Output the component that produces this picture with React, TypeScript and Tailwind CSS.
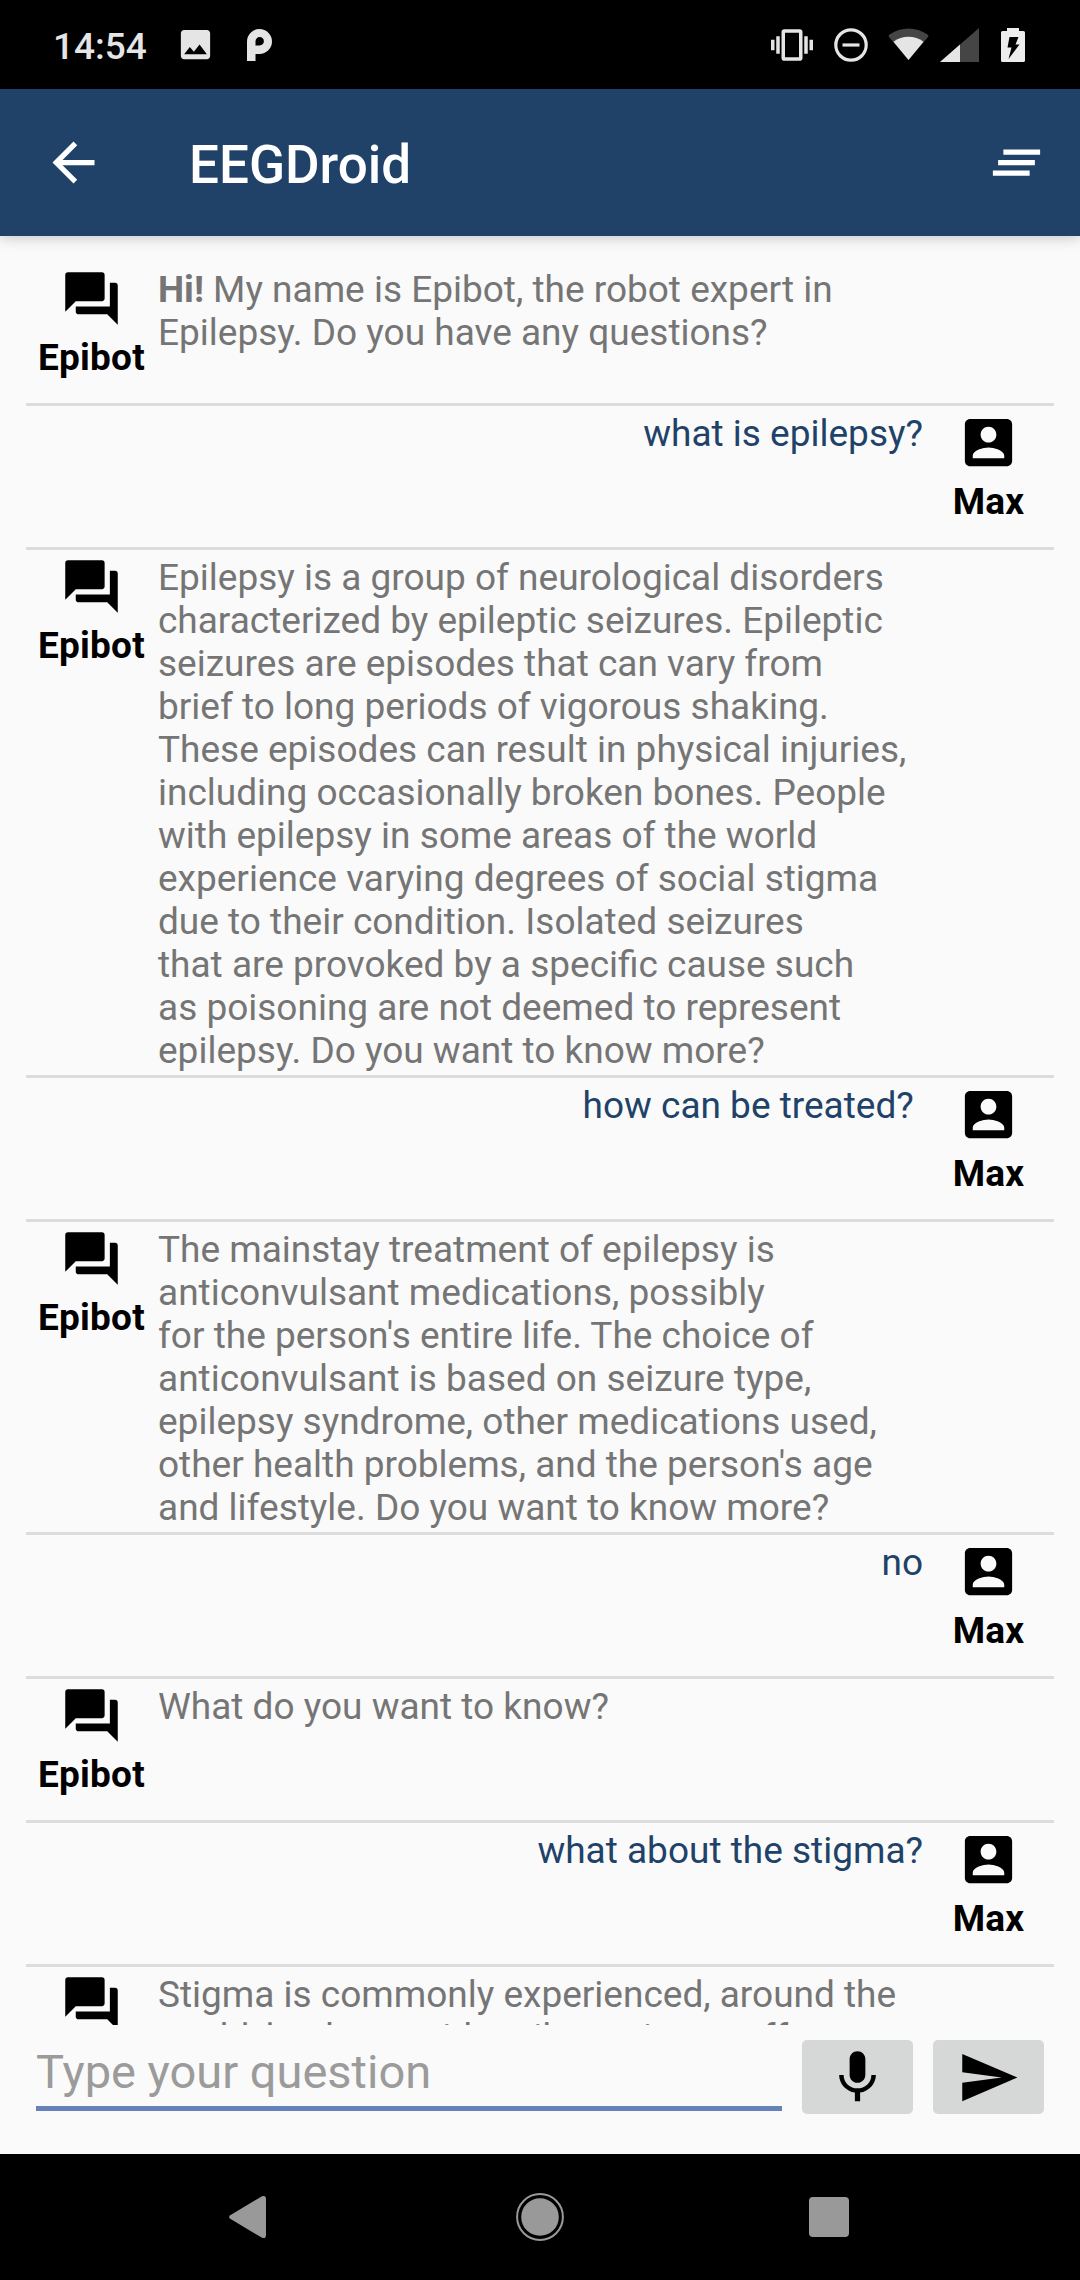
import type { ReactNode } from "react";

type Message = { from: "bot" | "user"; lines: ReactNode[] };

const messages: Message[] = [
  {
    from: "bot",
    lines: [
      <>
        <b className="font-bold">Hi!</b> My name is Epibot, the robot expert in
      </>,
      "Epilepsy. Do you have any questions?",
    ],
  },
  { from: "user", lines: ["what is epilepsy?"] },
  {
    from: "bot",
    lines: [
      "Epilepsy is a group of neurological disorders",
      "characterized by epileptic seizures. Epileptic",
      "seizures are episodes that can vary from",
      "brief to long periods of vigorous shaking.",
      "These episodes can result in physical injuries,",
      "including occasionally broken bones. People",
      "with epilepsy in some areas of the world",
      "experience varying degrees of social stigma",
      "due to their condition. Isolated seizures",
      "that are provoked by a specific cause such",
      "as poisoning are not deemed to represent",
      "epilepsy. Do you want to know more?",
    ],
  },
  { from: "user", lines: ["how can be treated? "] },
  {
    from: "bot",
    lines: [
      "The mainstay treatment of epilepsy is",
      "anticonvulsant medications, possibly",
      "for the person's entire life. The choice of",
      "anticonvulsant is based on seizure type,",
      "epilepsy syndrome, other medications used,",
      "other health problems, and the person's age",
      "and lifestyle. Do you want to know more?",
    ],
  },
  { from: "user", lines: ["no"] },
  { from: "bot", lines: ["What do you want to know?"] },
  { from: "user", lines: ["what about the stigma?"] },
  {
    from: "bot",
    lines: [
      "Stigma is commonly experienced, around the",
      "world, by those with epilepsy, it can affect",
    ],
  },
];

function Icon({ d }: { d: string }) {
  return (
    <svg viewBox="0 0 24 24" className="size-[63px] shrink-0" fill="currentColor">
      <path d={d} />
    </svg>
  );
}

const FORUM =
  "M21 6h-2v9H6v2c0 .55.45 1 1 1h11l4 4V7c0-.55-.45-1-1-1zm-4 6V3c0-.55-.45-1-1-1H3c-.55 0-1 .45-1 1v14l4-4h10c.55 0 1-.45 1-1z";
const ACCOUNT_BOX =
  "M3 5v14c0 1.1.89 2 2 2h14c1.1 0 2-.9 2-2V5c0-1.1-.9-2-2-2H5c-1.11 0-2 .9-2 2zm12 4c0 1.66-1.34 3-3 3s-3-1.34-3-3 1.34-3 3-3 3 1.34 3 3zm-9 8c0-2 4-3.1 6-3.1s6 1.1 6 3.1v1H6v-1z";
const ARROW_BACK = "M20 11H7.83l5.59-5.59L12 4l-8 8 8 8 1.41-1.41L7.83 13H20v-2z";
const CLEAR_ALL = "M5 13h14v-2H5v2zm-2 4h14v-2H3v2zM7 7v2h14V7H7z";
const MIC =
  "M12 14c1.66 0 2.99-1.34 2.99-3L15 5c0-1.66-1.34-3-3-3S9 3.34 9 5v6c0 1.66 1.34 3 3 3zm5.3-3c0 3-2.54 5.1-5.3 5.1S6.7 14 6.7 11H5c0 3.41 2.72 6.23 6 6.72V21h2v-3.28c3.28-.48 6-3.3 6-6.72h-1.7z";
const SEND = "M2.01 21L23 12 2.01 3 2 10l15 2-15 2z";

function StatusBar() {
  return (
    <div className="flex h-[89px] shrink-0 items-center bg-black pr-[55px] pl-[53px] text-[#e5e5e5]">
      <span className="mt-[3px] w-[123px] text-[37px] leading-[43px] font-medium">14:54</span>
      <svg viewBox="0 0 24 24" className="size-[39px]" fill="currentColor">
        <path d="M21 19V5c0-1.100-.9-2-2-2H5c-1.100 0-2 .9-2 2v14c0 1.100.9 2 2 2h14c1.100 0 2-.9 2-2zM8.500 13.500l2.500 3.010L14.500 12l4.500 6H5l3.500-4.500z" />
      </svg>
      <svg viewBox="0 0 25 32" className="ml-[32px] h-[32px] w-[25px]" fill="currentColor" fillRule="evenodd">
        <path d="M0 32V12.500a12.500 12.500 0 1 1 12.500 12.500H8.500V32zM8.500 16.500h4a4.200 4.200 0 1 0-4-4z" />
      </svg>
      <div className="grow" />
      <svg viewBox="0 0 24 24" className="size-[42px]" fill="currentColor">
        <path d="M0 15h2V9H0v6zm3 2h2V7H3v10zm19-8v6h2V9h-2zm-3 8h2V7h-2v10zM16.500 3h-9C6.670 3 6 3.670 6 4.500v15c0 .83.67 1.500 1.500 1.500h9c.83 0 1.500-.67 1.500-1.500v-15c0-.83-.67-1.500-1.500-1.500zM16 19H8V5h8v14z" />
      </svg>
      <svg viewBox="0 0 34 34" className="ml-[21px] size-[34px]" fill="none" stroke="currentColor" strokeWidth="3.200">
        <circle cx="17" cy="17" r="15.200" />
        <path d="M8.500 17h17" />
      </svg>
      <svg viewBox="0 0 41 34" className="ml-[20px] h-[34px] w-[41px]" fill="currentColor">
        <path d="M20.500 32L1 9Q0 7.500 1.500 6.500C13 -1.500 28 -1.500 39.500 6.500Q41 7.500 40 9z" fill="#454545" />
        <path d="M20.500 32L5.500 13.700C14 7 27 7 35.500 13.700z" />
      </svg>
      <svg viewBox="0 0 39 34" className="ml-[11px] h-[34px] w-[39px]" fill="currentColor">
        <path d="M39 0V34H0z" fill="#454545" />
        <path d="M20 16.600V34H0z" />
      </svg>
      <svg viewBox="0 0 24 34" className="ml-[22px] h-[34px] w-[24px]" fill="#ededed">
        <path d="M6 0H18V3H22.400Q24 3 24 4.600V32.400Q24 34 22.400 34H1.600Q0 34 0 32.400V4.600Q0 3 1.600 3H6z" />
        <path d="M8.500 9H17.500L14.500 16.500H18.500L7.500 31L10.500 19.500H6.500z" fill="#000" />
      </svg>
    </div>
  );
}

function AppBar() {
  return (
    <header className="z-10 flex h-[147px] shrink-0 items-center bg-[#214268] pr-[32px] pl-[42px] text-white shadow-[0_3px_12px_rgba(0,0,0,0.18)]">
      <Icon d={ARROW_BACK} />
      <h1 className="mt-[5px] ml-[84px] grow text-[53px] leading-[62px] font-medium">EEGDroid</h1>
      <Icon d={CLEAR_ALL} />
    </header>
  );
}

function Avatar({ icon, name }: { icon: string; name: string }) {
  return (
    <div className="flex w-[131px] shrink-0 flex-col items-center text-black">
      <Icon d={icon} />
      <span className="mt-[6px] text-[37px] leading-[43px] font-bold tracking-[0.2px]">{name}</span>
    </div>
  );
}

function MessageRow({ message }: { message: Message }) {
  const bot = message.from === "bot";
  return (
    <li className="flex min-h-[144px] shrink-0 border-b-[3px] border-[#dcdcdc] pt-[5px]">
      {bot && <Avatar icon={FORUM} name="Epibot" />}
      <div
        className={
          bot
            ? "grow pt-px pb-[3px] pl-px text-[#757575]"
            : "grow pt-px pb-[3px] text-right text-[#214268]"
        }
      >
        {message.lines.map((line, i) => (
          <p key={i} className="text-[37px] leading-[43px] whitespace-pre">
            {line}
          </p>
        ))}
      </div>
      {!bot && <Avatar icon={ACCOUNT_BOX} name="Max" />}
    </li>
  );
}

function Composer() {
  return (
    <div className="flex h-[129px] shrink-0 items-start bg-[#fafafa] pt-[15px] pr-[36px] pl-[36px]">
      <div className="flex h-[71px] w-[746px] border-b-[5px] border-[#6682b8]">
        <span className="mt-[4px] text-[47px] leading-[55px] text-[#9b9b9b]">Type your question</span>
      </div>
      <button className="ml-[20px] flex h-[74px] w-[111px] items-center justify-center rounded-[5px] bg-[#d6d8d7] text-black">
        <Icon d={MIC} />
      </button>
      <button className="ml-[20px] flex h-[74px] w-[111px] items-center justify-center rounded-[5px] bg-[#d6d8d7] text-black">
        <Icon d={SEND} />
      </button>
    </div>
  );
}

function NavBar() {
  return (
    <nav className="flex h-[126px] shrink-0 items-center bg-black pl-[229px] text-[#999]">
      <svg viewBox="0 0 37 44" className="h-[44px] w-[37px]" fill="currentColor">
        <path d="M1.200 20.200L33 1.200Q37 0 37 4V40Q37 44 33 42.800L1.200 23.800Q-1 22 1.200 20.200z" />
      </svg>
      <svg viewBox="0 0 48 48" className="ml-[250px] size-[48px]" fill="currentColor">
        <circle cx="24" cy="24" r="22.900" fill="none" stroke="currentColor" strokeWidth="2" />
        <circle cx="24" cy="24" r="18.800" />
      </svg>
      <div className="ml-[245px] size-[40px] rounded-[4px] bg-[#999]" />
    </nav>
  );
}

export default function App() {
  return (
    <div className="flex h-[2280px] w-[1080px] flex-col overflow-hidden bg-[#fafafa] font-[Roboto,sans-serif]">
      <StatusBar />
      <AppBar />
      <ul className="flex min-h-0 grow flex-col overflow-hidden px-[26px] pt-[26px]">
        {messages.map((message, i) => (
          <MessageRow key={i} message={message} />
        ))}
      </ul>
      <Composer />
      <NavBar />
    </div>
  );
}
